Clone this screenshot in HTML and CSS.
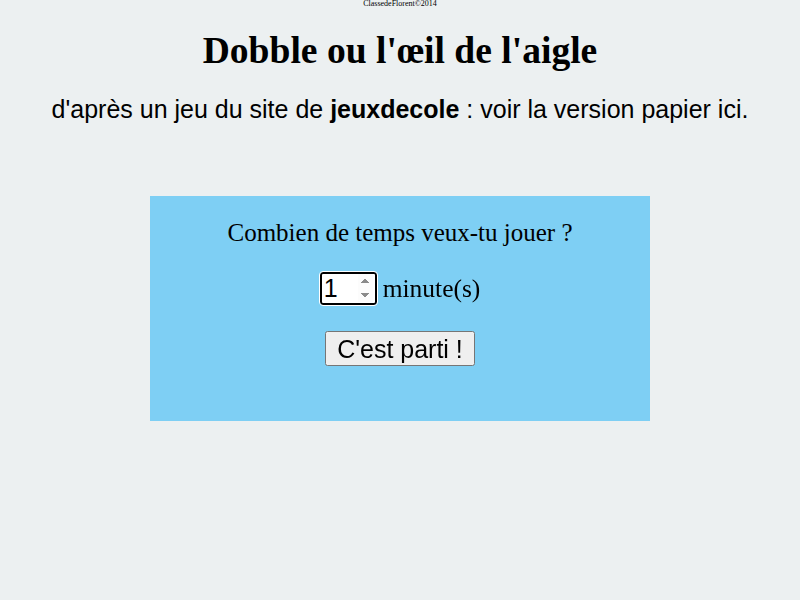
FILE: index.html
```html
<!DOCTYPE html>
<html>
<head>
    <meta charset="utf-8">
    <title>Dobble ou l'œil de l'aigle</title>
    <link rel="stylesheet" href="styles.css">
</head>
<body>
    <div class="credit">ClassedeFlorent©2014</div>
    <h1>Dobble ou l'œil de l'aigle</h1>
    <p class="intro">d'après un jeu du site de <b>jeuxdecole</b> : voir la version papier ici.</p>

    <div class="choix">
        <p class="question">Combien de temps veux-tu jouer ?</p>
        <div class="duree">
            <input type="number" id="minutes" value="1" min="1" autofocus>
            <span>minute(s)</span>
        </div>
        <button>C'est parti !</button>
    </div>
</body>
</html>
```

FILE: styles.css
```css
body {
    margin: 0;
    background: #ecf0f1;
    font-family: "Liberation Serif", serif;
    color: #000;
    text-align: center;
}
.credit {
    font-size: 8px;
    line-height: 8px;
    height: 8px;
}
h1 {
    font-size: 37.6px;
    margin: 20px 0 0;
    line-height: 46px;
}
.intro {
    font-family: "Liberation Sans", Arial, sans-serif;
    font-size: 25px;
    margin: 21px 0 0;
    line-height: 28px;
}
.choix {
    width: 500px;
    height: 225px;
    margin: 73px auto 0;
    background: #7ecff4;
    box-sizing: border-box;
    padding-top: 22px;
}
.question {
    font-size: 25px;
    margin: 0;
    line-height: 30px;
}
.duree {
    display: flex;
    justify-content: center;
    align-items: center;
    gap: 6px;
    margin-top: 24px;
    font-size: 25.5px;
}
.duree input {
    box-sizing: border-box;
    width: 57px;
    height: 33px;
    font-family: "Liberation Sans", Arial, sans-serif;
    font-size: 25px;
    padding: 0 2px;
    border: 2px solid #000;
    border-radius: 3px;
    outline: 1px solid #fff;
}
button {
    margin-top: 26px;
    font-family: "Liberation Sans", Arial, sans-serif;
    font-size: 25px;
    padding: 1px 10px;
    height: 35px;
    line-height: 30px;
}
```
